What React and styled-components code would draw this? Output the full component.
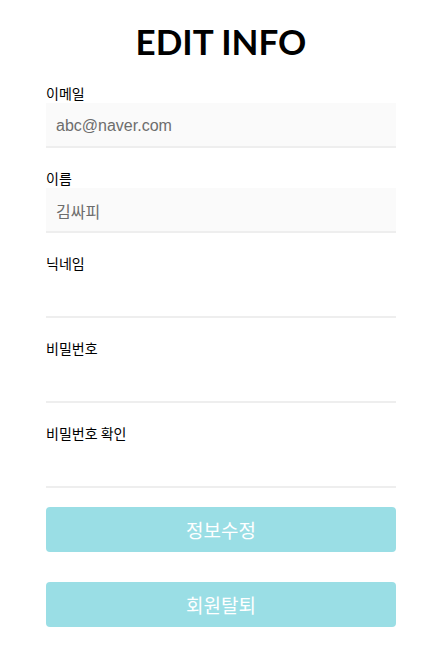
import React from 'react';
import styled, { createGlobalStyle } from 'styled-components';

const GlobalStyle = createGlobalStyle`
  body {
    margin: 0;
    background: #fff;
    font-family: "Noto Sans", "Noto Sans CJK KR", sans-serif;
  }
`;

const fields = [
  { label: '이메일', value: 'abc@naver.com', disabled: true },
  { label: '이름', value: '김싸피', disabled: true },
  { label: '닉네임', value: '' },
  { label: '비밀번호', value: '', type: 'password' },
  { label: '비밀번호 확인', value: '', type: 'password' },
];

export default function App() {
  return (
    <>
      <GlobalStyle />
      <Page>
        <Title>EDIT INFO</Title>
        {fields.map((f) => (
          <Field key={f.label}>
            <Label>{f.label}</Label>
            <Input
              type={f.type || 'text'}
              defaultValue={f.value}
              disabled={f.disabled}
              $disabled={f.disabled}
            />
          </Field>
        ))}
        <Button $first>정보수정</Button>
        <Button>회원탈퇴</Button>
      </Page>
    </>
  );
}

const Page = styled.div`
  width: 350px;
  margin-left: 46px;
  padding-top: 19px;
  display: flex;
  flex-direction: column;
`;

const Title = styled.h1`
  margin: 0;
  font-family: Lato, "Noto Sans", sans-serif;
  font-weight: 700;
  font-size: 35px;
  line-height: 44px;
  text-align: center;
  color: #000;
`;

const Field = styled.div`
  margin-top: 20px;
  display: flex;
  flex-direction: column;
`;

const Label = styled.label`
  font-family: "Noto Sans CJK KR", sans-serif;
  font-size: 14px;
  line-height: 20px;
  color: #000;
`;

const Input = styled.input`
  box-sizing: border-box;
  height: 45px;
  width: 100%;
  padding: 2px 10px 0;
  border: none;
  border-bottom: 2px solid #eeeeee;
  outline: none;
  background: ${(p) => (p.$disabled ? '#fafafa' : '#fff')};
  font-family: "Liberation Sans", "Noto Sans CJK KR", sans-serif;
  font-size: 16px;
  color: #6d6d6d;
  -webkit-text-fill-color: #6d6d6d;
  opacity: 1;
`;

const Button = styled.button`
  margin-top: ${(p) => (p.$first ? '19px' : '30px')};
  height: 45px;
  width: 100%;
  border: none;
  border-radius: 4px;
  background: #9adee5;
  color: #fff;
  font-family: "Noto Sans CJK KR", sans-serif;
  font-size: 19px;
  cursor: pointer;
`;
